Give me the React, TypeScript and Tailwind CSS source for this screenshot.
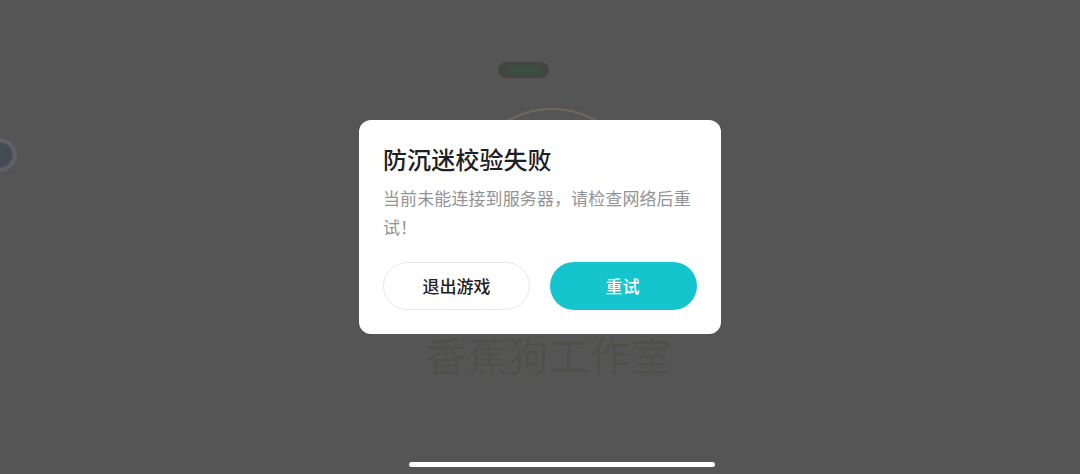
export default function App() {
  return (
    <div
      className="relative h-[474px] w-[1080px] overflow-hidden bg-[#555555]"
      style={{ fontFamily: '"Noto Sans CJK SC", "Noto Sans", sans-serif' }}
    >
      {/* Dimmed game screen behind the dialog */}
      <div className="absolute left-[498px] top-[62px] flex h-[16px] w-[51px] items-center justify-center rounded-full bg-[#434543]">
        <div className="h-[8px] w-[34px] rounded-full bg-[#3c523c] blur-[2px]" />
      </div>
      <div className="absolute left-[-16px] top-[139px] h-[32px] w-[32px] rounded-full border-[3px] border-[#66696d] bg-[#444b55] blur-[1px]" />
      <div className="absolute left-[462px] top-[108px] h-[180px] w-[180px] rounded-full border-2 border-[#6e695c] blur-[0.5px]" />
      <div className="absolute left-[426px] top-[331px] whitespace-nowrap text-[40px] leading-[46px] tracking-[1px] text-[#50504a] blur-[0.6px]">
        香蕉狗工作室
      </div>

      {/* Dialog */}
      <div className="absolute inset-0 flex flex-col items-center pt-[120px]">
        <div className="flex h-[214px] w-[362px] flex-col rounded-[12px] bg-white px-[24px] pt-[23px]">
          <h1 className="pl-px text-[24px] font-medium leading-[32px] tracking-[0.1px] text-[#1f2024] -ml-px">防沉迷校验失败</h1>
          <p className="mt-[8px] h-[58px] text-[17px] leading-[29px] tracking-[0.1px] text-[#939497]">
            当前未能连接到服务器，请检查网络后重试！
          </p>
          <div className="mt-[21px] flex gap-[20px]">
            <button className="h-[48px] w-[147px] rounded-full border border-[#e8e8e8] bg-white text-[17px] font-medium text-[#1f2024]">
              退出游戏
            </button>
            <button className="h-[48px] w-[147px] rounded-full bg-[#15c5ce] pr-[2px] text-[17px] font-medium text-white">
              重试
            </button>
          </div>
        </div>
      </div>

      {/* Home indicator */}
      <div className="absolute bottom-[7px] left-[409px] h-[5px] w-[306px] rounded-full bg-white" />
    </div>
  );
}
